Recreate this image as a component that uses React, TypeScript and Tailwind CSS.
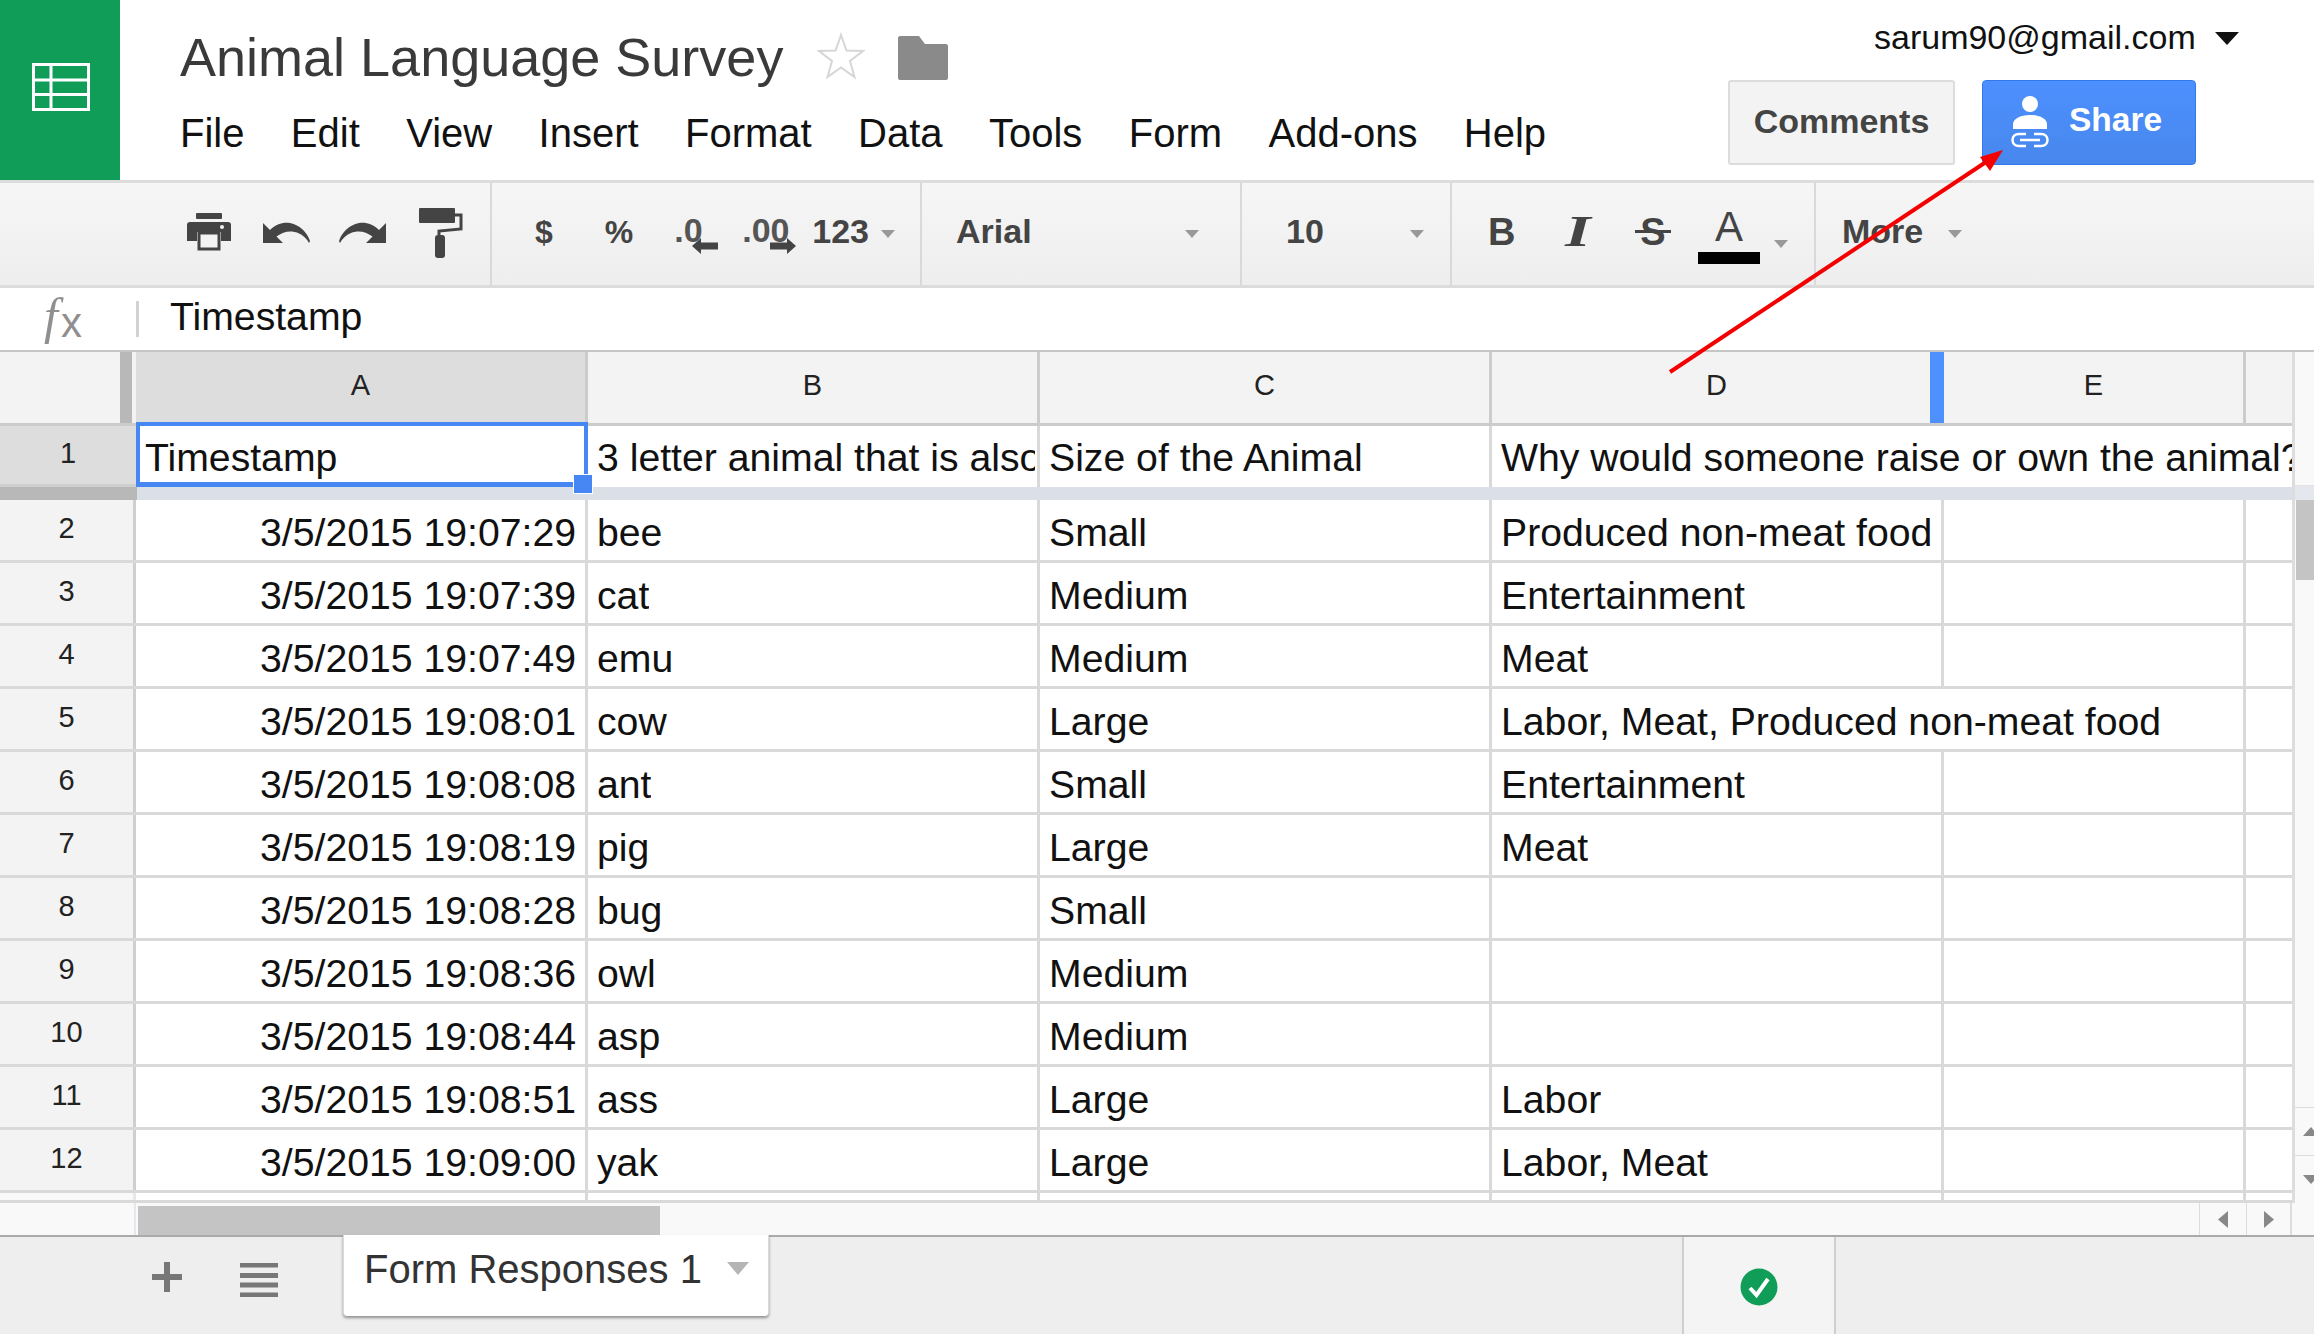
import React from "react";

const rows: [string, string, string, string, string, string][] = [
  ["2", "3/5/2015 19:07:29", "bee", "Small", "Produced non-meat food", ""],
  ["3", "3/5/2015 19:07:39", "cat", "Medium", "Entertainment", ""],
  ["4", "3/5/2015 19:07:49", "emu", "Medium", "Meat", ""],
  ["5", "3/5/2015 19:08:01", "cow", "Large", "Labor, Meat, Produced non-meat food", ""],
  ["6", "3/5/2015 19:08:08", "ant", "Small", "Entertainment", ""],
  ["7", "3/5/2015 19:08:19", "pig", "Large", "Meat", ""],
  ["8", "3/5/2015 19:08:28", "bug", "Small", "", ""],
  ["9", "3/5/2015 19:08:36", "owl", "Medium", "", ""],
  ["10", "3/5/2015 19:08:44", "asp", "Medium", "", ""],
  ["11", "3/5/2015 19:08:51", "ass", "Large", "Labor", ""],
  ["12", "3/5/2015 19:09:00", "yak", "Large", "Labor, Meat", ""],
];

const menu = ["File", "Edit", "View", "Insert", "Format", "Data", "Tools", "Form", "Add-ons", "Help"];

function Caret({ className = "" }: { className?: string }) {
  return (
    <svg width="14" height="8" viewBox="0 0 14 8" className={className}>
      <path d="M0 0H14L7 8Z" fill="#999" />
    </svg>
  );
}

function Undo({ flip = false }: { flip?: boolean }) {
  return (
    <svg width="47" height="23" viewBox="0 0 47 23" className={flip ? "-scale-x-100" : ""}>
      <path
        d="M0 2V22H20L13.5 15.5C20 10.5 28 9 35 12C40 14 44 18 46 22L47 20C44 11 37 4 27 2C20 1 13 3 7 9Z"
        fill="#444"
      />
    </svg>
  );
}

function Sep() {
  return <div className="w-[2px] self-stretch bg-[#d9d9d9]" />;
}

function HeadCell({ label, w, active = false, bar = false }: { label: string; w: string; active?: boolean; bar?: boolean }) {
  return (
    <div className={`${w} relative flex h-full items-center justify-center border-r-[3px] border-[#cccccc] pb-[4px] text-[29px] text-[#222] ${active ? "bg-[#dddddd]" : "bg-[#f3f3f3]"}`}>
      {label}
      {bar && <div className="absolute right-[-3px] top-0 h-full w-[14px] bg-[#4d90fe]" />}
    </div>
  );
}

function Cell({ w, text, right = false, spill = false, noBorder = false, body = false }: { w: string; text?: string; right?: boolean; spill?: boolean; noBorder?: boolean; body?: boolean }) {
  return (
    <div
      className={`${w} ${spill ? "relative z-10 overflow-visible" : "overflow-hidden pr-[2px]"} ${noBorder ? "" : "border-r-[3px] border-[#d9d9d9]"} ${right ? "justify-end pr-[9px]" : "justify-start pl-[9px]"} ${body ? "pt-[7px]" : "pt-[3px]"} flex h-full items-center whitespace-nowrap text-[39.2px] text-[#111]`}
    >
      <span className={spill ? "" : "block overflow-hidden"}>{text}</span>
    </div>
  );
}

export default function App() {
  return (
    <div className="relative flex h-[1334px] w-[2314px] flex-col overflow-hidden bg-white font-['Liberation_Sans',sans-serif]">
      {/* Header */}
      <header className="flex h-[180px] shrink-0">
        <div className="flex w-[120px] items-center justify-center bg-[#0f9d58] pb-[6px] pl-[2px]">
          <svg width="58" height="48" viewBox="0 0 58 48" fill="none" stroke="#fff" strokeWidth="3">
            <rect x="1.5" y="1.5" width="55" height="45" />
            <path d="M1.5 17H56.5M1.5 31.5H56.5M19 1.5V46.5" />
          </svg>
        </div>
        <div className="flex flex-1 flex-col pl-[60px]">
          <div className="mt-[26px] flex h-[62px] items-center">
            <h1 className="text-[54px] font-normal leading-[62px] text-[#3a3a3a]">Animal Language Survey</h1>
            <svg width="48" height="48" viewBox="0 0 48 48" className="ml-[34px] mt-[-2px]" fill="none" stroke="#d6d6d6" strokeWidth="2">
              <path d="M24 3L29.5 18.5L46 19L33 29L37.5 45L24 35.500L10.500 45L15 29L2 19L18.500 18.500Z" />
            </svg>
            <svg width="50" height="44" viewBox="0 0 50 44" className="ml-[33px] mt-[2px]">
              <path d="M0 2C0 1 1 0 2 0H21L27 8H48C49 8 50 9 50 10V42C50 43 49 44 48 44H2C1 44 0 43 0 42Z" fill="#8a8a8a" />
            </svg>
          </div>
          <nav className="mt-[22px] flex gap-[46.4px] text-[40px] leading-[46px] text-[#111]">
            {menu.map((m) => (
              <span key={m}>{m}</span>
            ))}
          </nav>
        </div>
        <div className="flex w-[586px] flex-col">
          <div className="mt-[17px] flex h-[40px] items-center">
            <span className="ml-[146px] text-[34px] text-[#111]">sarum90@gmail.com</span>
            <svg width="24" height="13" viewBox="0 0 24 13" className="ml-[19px] mt-[3px]">
              <path d="M0 0H24L12 13Z" fill="#111" />
            </svg>
          </div>
          <div className="mt-[23px] flex gap-[27px]">
            <button className="flex h-[85px] w-[227px] items-center justify-center rounded-[3px] border-[2px] border-[#dcdcdc] bg-[#f3f3f3] pb-[2px] text-[34px] font-bold text-[#444]">
              Comments
            </button>
            <button className="flex h-[85px] w-[214px] items-center rounded-[4px] border-[1px] border-[#3079ed] bg-gradient-to-b from-[#4d90fe] to-[#4787ed] pb-[4px] pl-[28px] text-[33.5px] font-bold text-white">
              <svg width="38" height="52" viewBox="0 0 38 52" className="mr-[20px] mt-[2px]">
                <circle cx="19" cy="8" r="8" fill="#fff" />
                <path d="M2 33V28C2 23 9 19 19 19C29 19 36 23 36 28V33Z" fill="#fff" />
                <g fill="none" stroke="#fff" strokeWidth="2.500">
                  <path d="M15 38H8C4 38 1.500 40.500 1.500 44C1.500 47.500 4 50 8 50H15" />
                  <path d="M23 38H30C34 38 36.500 40.500 36.500 44C36.500 47.500 34 50 30 50H23" />
                  <path d="M9 44H29" />
                </g>
              </svg>
              Share
            </button>
          </div>
        </div>
      </header>

      {/* Toolbar */}
      <div className="flex h-[108px] shrink-0 items-stretch border-y-[3px] border-[#dcdcdc] bg-gradient-to-b from-[#f6f6f6] to-[#eeeeee]">
        <div className="flex w-[490px] items-center pl-[187px]">
          <svg width="44" height="38" viewBox="0 0 44 38" className="mt-[-4px]">
            <rect x="9" y="0" width="26" height="6" rx="1" fill="#444" />
            <path d="M3 9H41C43 9 44 10 44 12V28H34V19H10V28H0V12C0 10 1 9 3 9Z" fill="#444" />
            <rect x="12" y="20" width="20" height="16" fill="#f3f3f3" stroke="#444" strokeWidth="3" />
            <circle cx="35" cy="14" r="2" fill="#f3f3f3" />
          </svg>
          <div className="ml-[32px] mt-[-4px]"><Undo /></div>
          <div className="ml-[29px] mt-[-4px]"><Undo flip /></div>
          <svg width="44" height="50" viewBox="0 0 44 50" className="ml-[33px] mt-[-3px]" fill="none">
            <rect x="0" y="0" width="36" height="15" rx="1" fill="#444" />
            <path d="M36 7H42V21L20 23V30" stroke="#444" strokeWidth="3" />
            <rect x="16" y="27" width="10" height="23" rx="3" fill="#444" />
          </svg>
        </div>
        <Sep />
        <div className="flex w-[428px] items-center text-[32px] font-bold text-[#444]">
          <span className="ml-[43px] mt-[-5px]">$</span>
          <span className="ml-[52px] mt-[-5px]">%</span>
          <div className="relative ml-[41px] h-[50px] w-[44px]">
            <span className="absolute left-0 top-[-3px] text-[34px] leading-[48px] text-[#555]">.0</span>
            <svg width="26" height="16" viewBox="0 0 26 16" className="absolute left-[18px] top-[29px]">
              <path d="M0 8L9 0V4.500H26V11.500H9V16Z" fill="#444" />
            </svg>
          </div>
          <div className="relative ml-[24px] h-[50px] w-[70px]">
            <span className="absolute left-0 top-[-3px] text-[34px] leading-[48px] text-[#555]">.00</span>
            <svg width="26" height="16" viewBox="0 0 26 16" className="absolute left-[28px] top-[29px]">
              <path d="M26 8L17 0V4.500H0V11.500H17V16Z" fill="#444" />
            </svg>
          </div>
          <span className="mt-[-5px] text-[34px]">123</span>
          <Caret className="ml-[12px]" />
        </div>
        <Sep />
        <div className="flex w-[318px] items-center text-[34px] font-bold text-[#444]">
          <span className="ml-[34px] mt-[-5px] w-[229px]">Arial</span>
          <Caret />
        </div>
        <Sep />
        <div className="flex w-[208px] items-center text-[34px] font-bold text-[#444]">
          <span className="ml-[44px] mt-[-5px] w-[124px]">10</span>
          <Caret />
        </div>
        <Sep />
        <div className="flex w-[362px] items-center text-[#444]">
          <span className="ml-[36px] mt-[-5px] w-[27px] text-[38px] font-bold leading-none">B</span>
          <span className="ml-[59px] mt-[-5px] w-[36px] scale-x-150 font-['Liberation_Serif',serif] text-[44px] font-bold italic leading-none">I</span>
          <span className="relative ml-[25px] mt-[-5px] w-[36px] text-center text-[38px] font-bold leading-none">
            S
            <span className="absolute left-0 top-[17px] h-[3px] w-[36px] bg-[#444]" />
          </span>
          <div className="relative ml-[27px] flex h-[60px] w-[62px] flex-col items-center">
            <span className="text-[42px] leading-[46px]">A</span>
            <div className="absolute bottom-0 h-[12px] w-[62px] bg-black" />
          </div>
          <Caret className="ml-[14px] mt-[20px]" />
        </div>
        <Sep />
        <div className="flex flex-1 items-center text-[34px] font-bold text-[#444]">
          <span className="ml-[26px] mt-[-5px] w-[106px]">More</span>
          <Caret />
        </div>
      </div>

      {/* Formula bar */}
      <div className="flex h-[64px] shrink-0 items-center border-b-[2px] border-[#c6c6c6]">
        <div className="mt-[-6px] flex w-[136px] items-center pl-[44px] text-[#8f8f8f]">
          <span className="font-['Liberation_Serif',serif] text-[50px] italic leading-none">f</span>
          <span className="ml-[3px] mt-[14px] text-[42px] leading-none">x</span>
        </div>
        <div className="h-[36px] w-[3px] bg-[#d2d2d2]" />
        <span className="ml-[31px] mt-[-5px] text-[39.2px] leading-none text-[#111]">Timestamp</span>
      </div>

      {/* Grid */}
      <div className="relative flex h-[883px] shrink-0 flex-col">
        <div className="flex h-[851px] shrink-0">
          <div className="flex w-[2296px] flex-col">
            <div className="flex h-[74px] shrink-0 border-b-[3px] border-[#cccccc]">
              <div className="flex w-[136px]">
                <div className="w-[120px] bg-[#f3f3f3]" />
                <div className="w-[12px] bg-[#b8b8b8]" />
                <div className="w-[4px] bg-[#f3f3f3]" />
              </div>
              <HeadCell label="A" w="w-[452px]" active />
              <HeadCell label="B" w="w-[452px]" />
              <HeadCell label="C" w="w-[452px]" />
              <HeadCell label="D" w="w-[452px]" bar />
              <HeadCell label="E" w="w-[302px]" />
              <div className="flex-1 bg-[#f3f3f3]" />
            </div>
            <div className="flex h-[61px] w-[2292px] shrink-0 overflow-hidden">
              <div className="flex w-[136px] items-center justify-center border-b-[3px] border-[#cfcfcf] bg-[#dddddd] pb-[2px] text-[29px] text-[#222]">1</div>
              <Cell w="w-[452px]" text="Timestamp" />
              <Cell w="w-[452px]" text="3 letter animal that is also" />
              <Cell w="w-[452px]" text="Size of the Animal" />
              <Cell w="w-[452px]" text="Why would someone raise or own the animal?" spill noBorder />
            </div>
            <div className="flex h-[13px] shrink-0">
              <div className="w-[137px] bg-[#b8b8b8]" />
              <div className="flex-1 bg-[#dbdfe8]" />
            </div>
            {rows.map((r) => (
              <div key={r[0]} className="flex h-[63px] shrink-0 border-b-[3px] border-[#d9d9d9]">
                <div className="flex w-[136px] items-center justify-center border-r-[3px] border-[#cfcfcf] bg-[#f3f3f3] pb-[2px] text-[29px] text-[#222]">{r[0]}</div>
                <Cell body w="w-[452px]" text={r[1]} right />
                <Cell body w="w-[452px]" text={r[2]} />
                <Cell body w="w-[452px]" text={r[3]} />
                <Cell body w="w-[452px]" text={r[4]} spill={r[0] === "5"} noBorder={r[0] === "5"} />
                <Cell body w="w-[302px]" text={r[5]} />
                <div className="flex-1" />
              </div>
            ))}
            <div className="flex h-[10px] shrink-0 border-b-[3px] border-[#d9d9d9]">
              <div className="w-[136px] border-r-[3px] border-[#e8e8e8] bg-[#f9f9f9]" />
              <Cell w="w-[452px]" />
              <Cell w="w-[452px]" />
              <Cell w="w-[452px]" />
              <Cell w="w-[452px]" />
              <Cell w="w-[302px]" />
            </div>
          </div>
          {/* Vertical scrollbar */}
          <div className="flex flex-1 flex-col border-l-[3px] border-[#dddddd] bg-[#f9f9f9]">
            <div className="h-[134px] border-b-[1px] border-[#e4e4e4]" />
            <div className="h-[14px] bg-[#e4e7ee]" />
            <div className="ml-[1px] h-[80px] bg-[#c4c4c4]" />
            <div className="flex-1" />
            <div className="flex h-[48px] items-center justify-center border-t-[1px] border-[#dddddd] pl-[8px]">
              <svg width="16" height="9" viewBox="0 0 16 9"><path d="M0 9L8 0L16 9Z" fill="#888" /></svg>
            </div>
            <div className="flex h-[48px] items-center justify-center border-t-[1px] border-[#dddddd] pl-[8px]">
              <svg width="16" height="9" viewBox="0 0 16 9"><path d="M0 0L8 9L16 0Z" fill="#888" /></svg>
            </div>
          </div>
        </div>
        {/* Horizontal scrollbar */}
        <div className="flex h-[32px] shrink-0 bg-[#f9f9f9]">
          <div className="w-[136px] border-r-[2px] border-[#e4e7ee]" />
          <div className="ml-[2px] mt-[3px] h-[29px] w-[522px] bg-[#c4c4c4]" />
          <div className="w-[1539px]" />
          <div className="flex w-[48px] items-center justify-center border-x-[1px] border-[#dddddd]">
            <svg width="10" height="17" viewBox="0 0 10 17"><path d="M10 0L0 8.500L10 17Z" fill="#888" /></svg>
          </div>
          <div className="flex w-[45px] items-center justify-center border-r-[2px] border-[#dddddd]">
            <svg width="10" height="17" viewBox="0 0 10 17"><path d="M0 0L10 8.500L0 17Z" fill="#888" /></svg>
          </div>
        </div>
        {/* Selected cell overlay */}
        <div className="pointer-events-none absolute left-[136px] top-[70px] z-20 h-[65px] w-[452px] border-[4px] border-b-[5px] border-[#4787f3]" />
        <div className="absolute left-[573px] top-[122px] z-30 h-[20px] w-[20px] border-[1px] border-white bg-[#4787f3]" />
      </div>

      {/* Bottom bar */}
      <div className="flex h-[99px] shrink-0 items-start border-t-[2px] border-[#aaaaaa] bg-[#eeeeee]">
        <div className="flex w-[343px] items-start pl-[152px] pt-[25px]">
          <svg width="30" height="30" viewBox="0 0 30 30"><path d="M12 0H18V12H30V18H18V30H12V18H0V12H12Z" fill="#777" /></svg>
          <svg width="38" height="34" viewBox="0 0 38 34" className="ml-[58px] mt-[1px]">
            <path d="M0 2H38M0 12.500H38M0 22H38M0 32H38" stroke="#777" strokeWidth="5" />
          </svg>
        </div>
        <div className="relative z-10 -mt-[2px] flex h-[81px] w-[426px] items-start rounded-b-[4px] border-x-[1px] border-[#dadada] bg-white pl-[20px] pt-[11px] shadow-[0_2px_3px_rgba(0,0,0,0.4)]">
          <span className="text-[40px] leading-[46px] text-[#333]">Form Responses 1</span>
          <svg width="22" height="13" viewBox="0 0 22 13" className="ml-[25px] mt-[16px]"><path d="M0 0H22L11 13Z" fill="#b5b5b5" /></svg>
        </div>
        <div className="w-[913px]" />
        <div className="flex h-full w-[154px] items-center justify-center border-x-[2px] border-[#cfcfcf] bg-[#f4f4f4] pt-[2px]">
          <svg width="38" height="38" viewBox="0 0 38 38">
            <circle cx="19" cy="19" r="18.500" fill="#0f9d58" />
            <path d="M10 20L16.500 27L28 11" fill="none" stroke="#fff" strokeWidth="4" />
          </svg>
        </div>
      </div>

      {/* Annotation arrow */}
      <svg className="pointer-events-none absolute left-0 top-0 z-40" width="2314" height="1334" viewBox="0 0 2314 1334">
        <path d="M1670 372L1992 158" stroke="#f40000" strokeWidth="4" fill="none" />
        <path d="M2003 150L1980 157L1990 171Z" fill="#f40000" />
      </svg>
    </div>
  );
}
